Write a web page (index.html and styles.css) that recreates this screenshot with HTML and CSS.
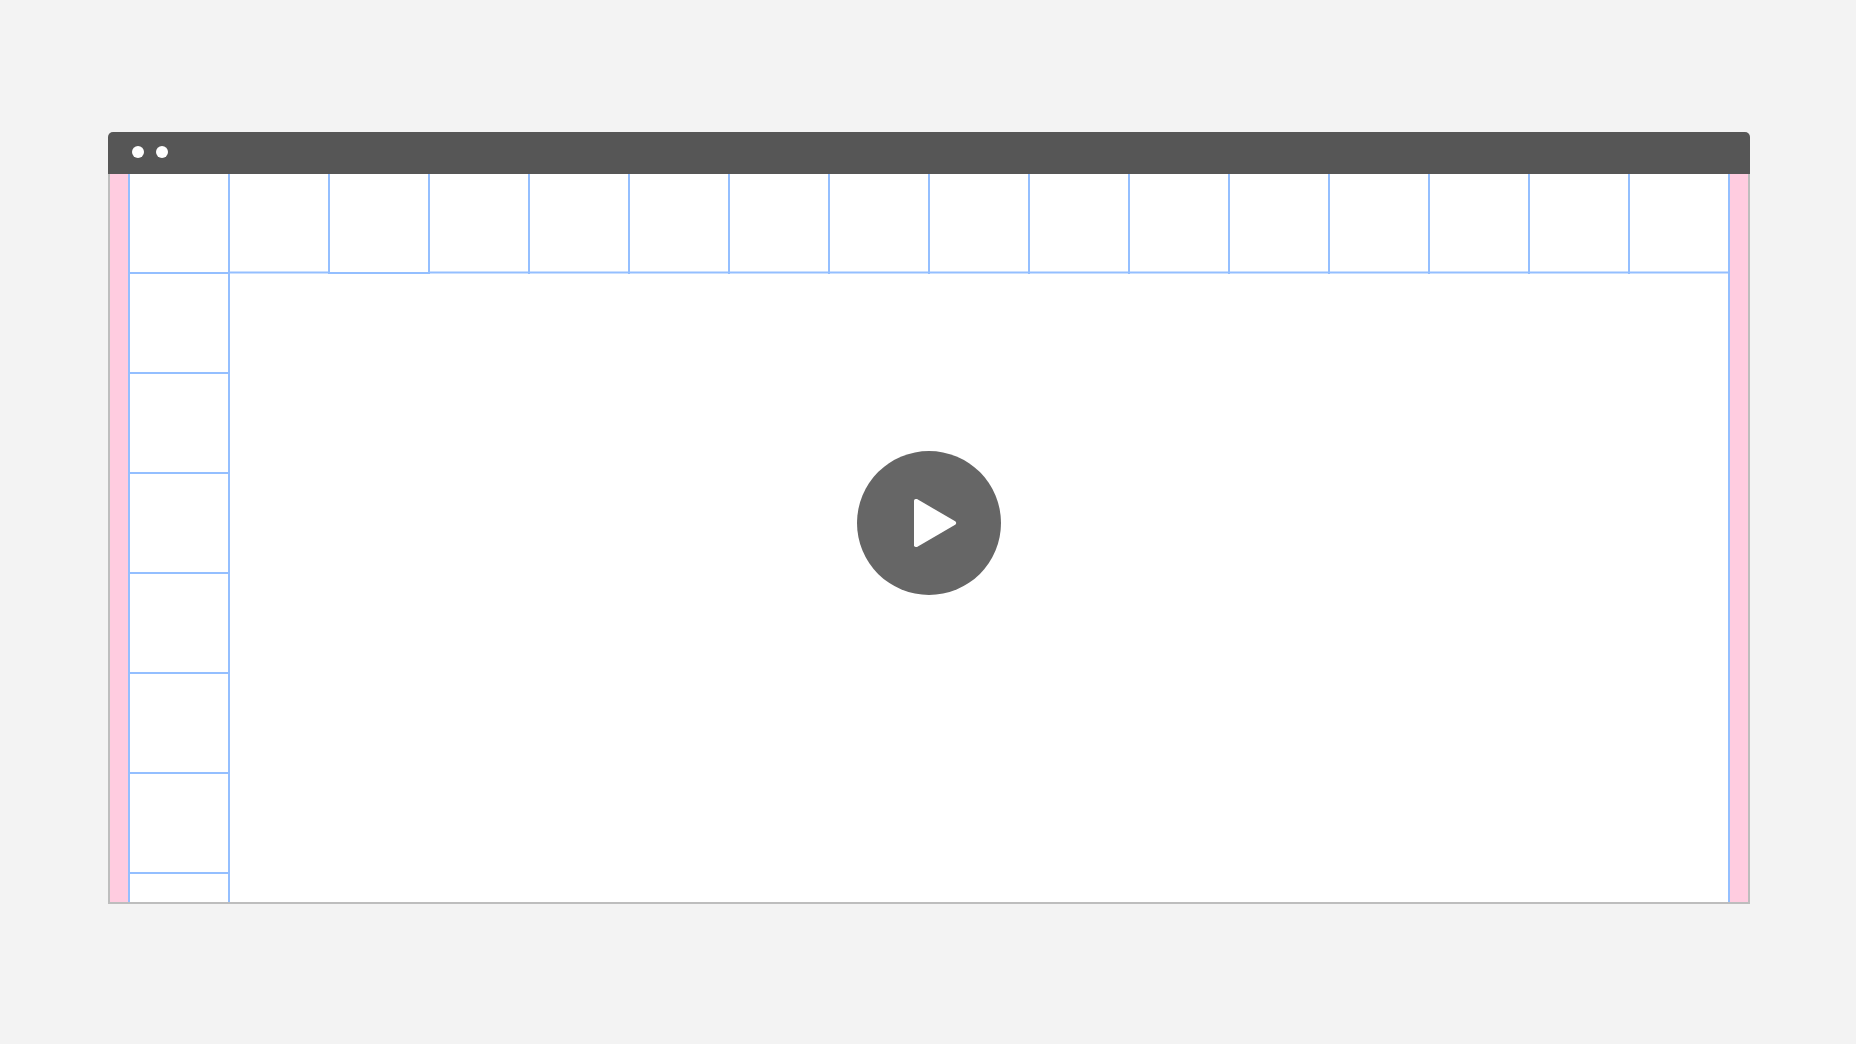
FILE: index.html
```html
<!DOCTYPE html>
<html lang="en">
<head>
<meta charset="utf-8">
<title>Grid layout video</title>
<link rel="stylesheet" href="styles.css">
</head>
<body>
<main class="window">
  <header class="titlebar"><span class="dot"></span><span class="dot"></span></header>
  <div class="viewport">
    <div class="margin"></div>
    <div class="content">
      <div class="columns">
        <div class="column solid"></div>
        <div class="column"></div>
        <div class="column solid"></div>
        <div class="column"></div>
        <div class="column"></div>
        <div class="column"></div>
        <div class="column"></div>
        <div class="column"></div>
        <div class="column"></div>
        <div class="column"></div>
        <div class="column"></div>
        <div class="column"></div>
        <div class="column"></div>
        <div class="column"></div>
        <div class="column"></div>
        <div class="column"></div>
      </div>
      <div class="rows">
        <div class="row"></div>
        <div class="row"></div>
        <div class="row"></div>
        <div class="row"></div>
        <div class="row"></div>
        <div class="row"></div>
      </div>
    </div>
    <div class="margin"></div>
  </div>
  <button class="play" aria-label="Play">
    <svg width="144" height="144" viewBox="0 0 144 144">
      <path d="M57 49.700v44.600q0 1.700 1.700 1.700h1.300L98.200 73.700q1-.7 1-1.700t-1-1.700L60 48h-1.300Q57 48 57 49.700z" fill="#fff"/>
    </svg>
  </button>
</main>
</body>
</html>
```
FILE: styles.css
```css
* { box-sizing: border-box; }

body {
  margin: 0;
  height: 1044px;
  padding: 132px 106px 140px 108px;
  background: #f3f3f3;
  font-family: "Liberation Sans", sans-serif;
}

.window {
  position: relative;
  display: flex;
  flex-direction: column;
  width: 1642px;
  height: 772px;
}

.titlebar {
  display: flex;
  gap: 12px;
  height: 42px;
  padding: 14px 24px;
  border-radius: 5px 5px 0 0;
  background: #565656;
}

.dot {
  width: 12px;
  height: 12px;
  border-radius: 50%;
  background: #fff;
}

.viewport {
  display: flex;
  flex: 1;
  border: 2px solid #bdbdbd;
  border-top: 0;
  background: #fff;
}

.margin {
  width: 18px;
  background: #ffcce0;
}

.content {
  display: flex;
  flex: 1;
  flex-direction: column;
  border: solid #94bfff;
  border-width: 0 2px;
}

.columns {
  display: flex;
  height: 100px;
}

.column {
  width: 100px;
  border-right: 2px solid #94bfff;
  background: linear-gradient(#cadfff 1px, #94bfff 1px, #94bfff 2px, #cadfff 2px) bottom / 100% 3px no-repeat;
}

.column:last-child {
  width: 98px;
  border-right: 0;
}

.column.solid {
  background: linear-gradient(#94bfff, #94bfff) bottom / 100% 2px no-repeat;
}

.rows {
  flex: 1;
  width: 100px;
  border-right: 2px solid #94bfff;
}

.row {
  height: 100px;
  border-bottom: 2px solid #94bfff;
}

.play {
  position: absolute;
  top: 319px;
  left: 749px;
  width: 144px;
  height: 144px;
  padding: 0;
  border: 0;
  border-radius: 50%;
  background: #666;
}

.play svg { display: block; }
```
